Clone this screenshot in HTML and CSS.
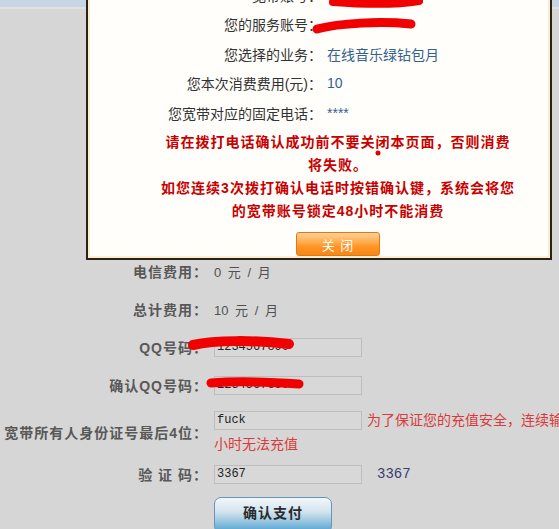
FILE: index.html
```html
<!DOCTYPE html>
<html lang="zh-CN">
<head>
<meta charset="utf-8">
<title>确认支付</title>
<link rel="stylesheet" href="styles.css">
</head>
<body>
<div class="topbar"></div>
<form class="payform">
  <div class="row"><div class="label">电信费用：</div><div class="value plain">0 元 / 月</div></div>
  <div class="row"><div class="label">总计费用：</div><div class="value plain">10 元 / 月</div></div>
  <div class="row"><div class="label">QQ号码：</div><div class="value"><input class="field" value="1234567890"></div></div>
  <div class="row"><div class="label">确认QQ号码：</div><div class="value"><input class="field" value="1234567890"></div></div>
  <div class="row row-tall"><div class="label">宽带所有人身份证号最后4位：</div><div class="value value-top"><input class="field" value="fuck"><span class="warn">为了保证您的充值安全，连续输入错误5次，系统将锁定48<br>小时无法充值</span></div></div>
  <div class="row row-short"><div class="label">验 证 码：</div><div class="value"><input class="field" value="3367"><span class="captcha">3367</span></div></div>
  <div class="row row-btn"><div class="label"></div><div class="value"><button type="button" class="pay">确认支付</button></div></div>
</form>

<div class="dialog">
  <div class="info">
    <div class="ilabel">宽带账号：</div><div class="ival">&nbsp;</div>
    <div class="ilabel">您的服务账号：</div><div class="ival">&nbsp;</div>
    <div class="ilabel">您选择的业务：</div><div class="ival">在线音乐绿钻包月</div>
    <div class="ilabel">您本次消费费用(元)：</div><div class="ival">10</div>
    <div class="ilabel">您宽带对应的固定电话：</div><div class="ival">****</div>
  </div>
  <p class="alert">请在拨打电话确认成功前不要关闭本页面，否则消费<br>将失败。<br>如您连续3次拨打确认电话时按错确认键，系统会将您<br>的宽带账号锁定48小时不能消费</p>
  <button type="button" class="close">关 闭</button>
</div>

<svg class="marks" width="559" height="529" viewBox="0 0 559 529">
  <g fill="none" stroke="#f00000" stroke-linecap="round" stroke-linejoin="round">
    <path d="M333 2 C360 4 395 5 419 1" stroke-width="8"/>
    <path d="M317 29 C340 23 380 21 411 24" stroke-width="9"/>
    <path d="M193 345 C215 340 255 340 289 344" stroke-width="10"/>
    <path d="M211 383 C235 381 270 382 299 384" stroke-width="9"/>
  </g>
  <circle cx="378" cy="153" r="2.5" fill="#e00000"/>
</svg>
</body>
</html>
```

FILE: styles.css
```css
html, body {
  overflow: hidden;
}
body {
  margin: 0;
  width: 559px;
  height: 529px;
  position: relative;
  background: #d6d6d6;
  font-family: "Liberation Sans", "Noto Sans CJK SC", sans-serif;
  font-size: 14px;
  color: #333;
}
.topbar {
  height: 7px;
  background: #c7d5e4;
  border-bottom: 2px solid #e0e0e0;
}

/* form */
.payform {
  padding-top: 243px;
  width: 760px;
}
.row {
  display: flex;
  align-items: center;
  height: 38px;
}
.row-tall { height: 56px; }
.row-short { height: 28px; }
.row-btn { height: auto; margin-top: 9px; align-items: flex-start; }
.label {
  width: 208px;
  flex: none;
  text-align: right;
  font-weight: bold;
  letter-spacing: 1px;
  color: #585858;
  font-size: 14px;
  white-space: nowrap;
}
.value {
  margin-left: 6px;
  white-space: nowrap;
}
.plain {
  font-size: 13px;
  color: #505050;
  word-spacing: 3px;
}
.value-top {
  align-self: flex-start;
  padding-top: 4px;
  line-height: 22px;
}
.field {
  box-sizing: border-box;
  width: 148px;
  height: 19px;
  margin: 0;
  padding: 0 2px;
  border: 1px solid #bdbdbd;
  background: #d8d8d8;
  font-family: "Liberation Mono", monospace;
  font-size: 12px;
  color: #222;
  vertical-align: middle;
}
.warn {
  margin-left: 5px;
  color: #d93a3a;
  font-size: 14px;
  vertical-align: middle;
}
.captcha {
  margin-left: 15px;
  font-family: "Liberation Mono", monospace;
  font-size: 14px;
  color: #3b3b6e;
  vertical-align: middle;
}
.pay {
  box-sizing: border-box;
  width: 118px;
  height: 36px;
  padding: 0 0 6px;
  border: 1px solid #6596b9;
  border-radius: 7px;
  background: linear-gradient(#f3f7fb 0%, #d3e4ef 40%, #96c4df 70%, #4ea3d2 100%);
  font-family: "Liberation Sans", "Noto Sans CJK SC", sans-serif;
  font-size: 14px;
  font-weight: bold;
  letter-spacing: 1px;
  color: #2b2b2b;
}

/* dialog overlay */
.dialog {
  position: absolute;
  left: 86px;
  top: -22px;
  width: 466px;
  box-sizing: border-box;
  border: 2px solid #2b2117;
  background: #fffefa;
  box-shadow: inset 0 0 0 2px #fbedcf;
  padding: 0 0 2px 38px;
}
.info {
  display: grid;
  grid-template-columns: 196px 1fr;
  column-gap: 5px;
  grid-auto-rows: 29.5px;
  align-items: center;
  font-size: 14px;
}
.ilabel {
  text-align: right;
  color: #333;
  white-space: nowrap;
}
.ival {
  color: #34628e;
  white-space: nowrap;
}
.alert {
  margin: 3px 0 0;
  text-align: center;
  line-height: 23px;
  font-size: 14px;
  font-weight: bold;
  letter-spacing: 1px;
  color: #c80000;
  white-space: nowrap;
}
.close {
  display: block;
  box-sizing: border-box;
  width: 84px;
  height: 24px;
  margin: 9.5px auto 0;
  padding: 0;
  border: 1px solid #e07812;
  border-radius: 3px;
  background: linear-gradient(#ffd199 0%, #ffa948 45%, #ff9626 60%, #f58716 100%);
  font-family: "Liberation Sans", "Noto Sans CJK SC", sans-serif;
  font-size: 13px;
  letter-spacing: 1px;
  color: #fff;
}

.marks {
  position: absolute;
  left: 0;
  top: 0;
  pointer-events: none;
}
```
